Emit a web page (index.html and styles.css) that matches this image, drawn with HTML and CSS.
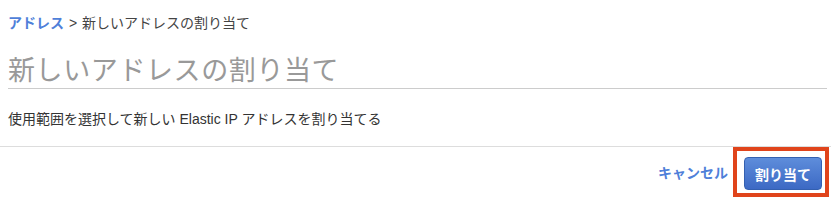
FILE: index.html
```html
<!DOCTYPE html>
<html lang="ja">
<head>
  <meta charset="UTF-8">
  <title>新しいアドレスの割り当て</title>
  <link rel="stylesheet" href="styles.css">
</head>
<body>
  <div class="page">
    <div class="breadcrumb">
      <a class="crumb-link" href="#">アドレス</a>
      <span class="crumb-sep">&gt;</span>
      <span class="crumb-current">新しいアドレスの割り当て</span>
    </div>

    <h1 class="title">新しいアドレスの割り当て</h1>

    <p class="desc">使用範囲を選択して新しい Elastic IP アドレスを割り当てる</p>
  </div>

  <div class="actions">
    <a class="cancel" href="#">キャンセル</a>
    <div class="highlight">
      <button class="primary-btn">割り当て</button>
    </div>
  </div>
</body>
</html>
```

FILE: styles.css
```css
body {
  margin: 0;
  font-family: "Liberation Sans", "Noto Sans CJK JP", sans-serif;
  color: #333;
  background: #fff;
}

.page {
  padding: 0 4px 0 8px;
}

.breadcrumb {
  padding-top: 14px;
  font-size: 14px;
  line-height: 18px;
  color: #444;
}

.crumb-link {
  color: #4f7fd9;
  font-weight: bold;
  text-decoration: none;
}

.crumb-sep {
  margin: 0 1px;
}

.title {
  margin: 24px 0 0;
  padding-bottom: 1px;
  font-size: 27px;
  line-height: 31px;
  letter-spacing: 0.6px;
  font-weight: normal;
  color: #999;
  border-bottom: 1px solid #ccc;
}

.desc {
  margin: 20px 0 0;
  padding-bottom: 17px;
  font-size: 14px;
  line-height: 20px;
  color: #333;
}

.actions {
  display: flex;
  justify-content: flex-end;
  align-items: center;
  gap: 5px;
  border-top: 1px solid #ddd;
  padding: 0 2px 0 0;
}

.cancel {
  color: #4f7fd9;
  font-weight: bold;
  font-size: 14px;
  text-decoration: none;
}

.highlight {
  border: 4px solid #e0441b;
  padding: 6px 3px 3px 7px;
}

.primary-btn {
  display: block;
  width: 78px;
  height: 33px;
  border: 1px solid #3460b0;
  border-radius: 4px;
  background: linear-gradient(#5e8ddb, #3c69c4);
  color: #fff;
  font-family: inherit;
  font-size: 14px;
  font-weight: bold;
  cursor: pointer;
}
```
